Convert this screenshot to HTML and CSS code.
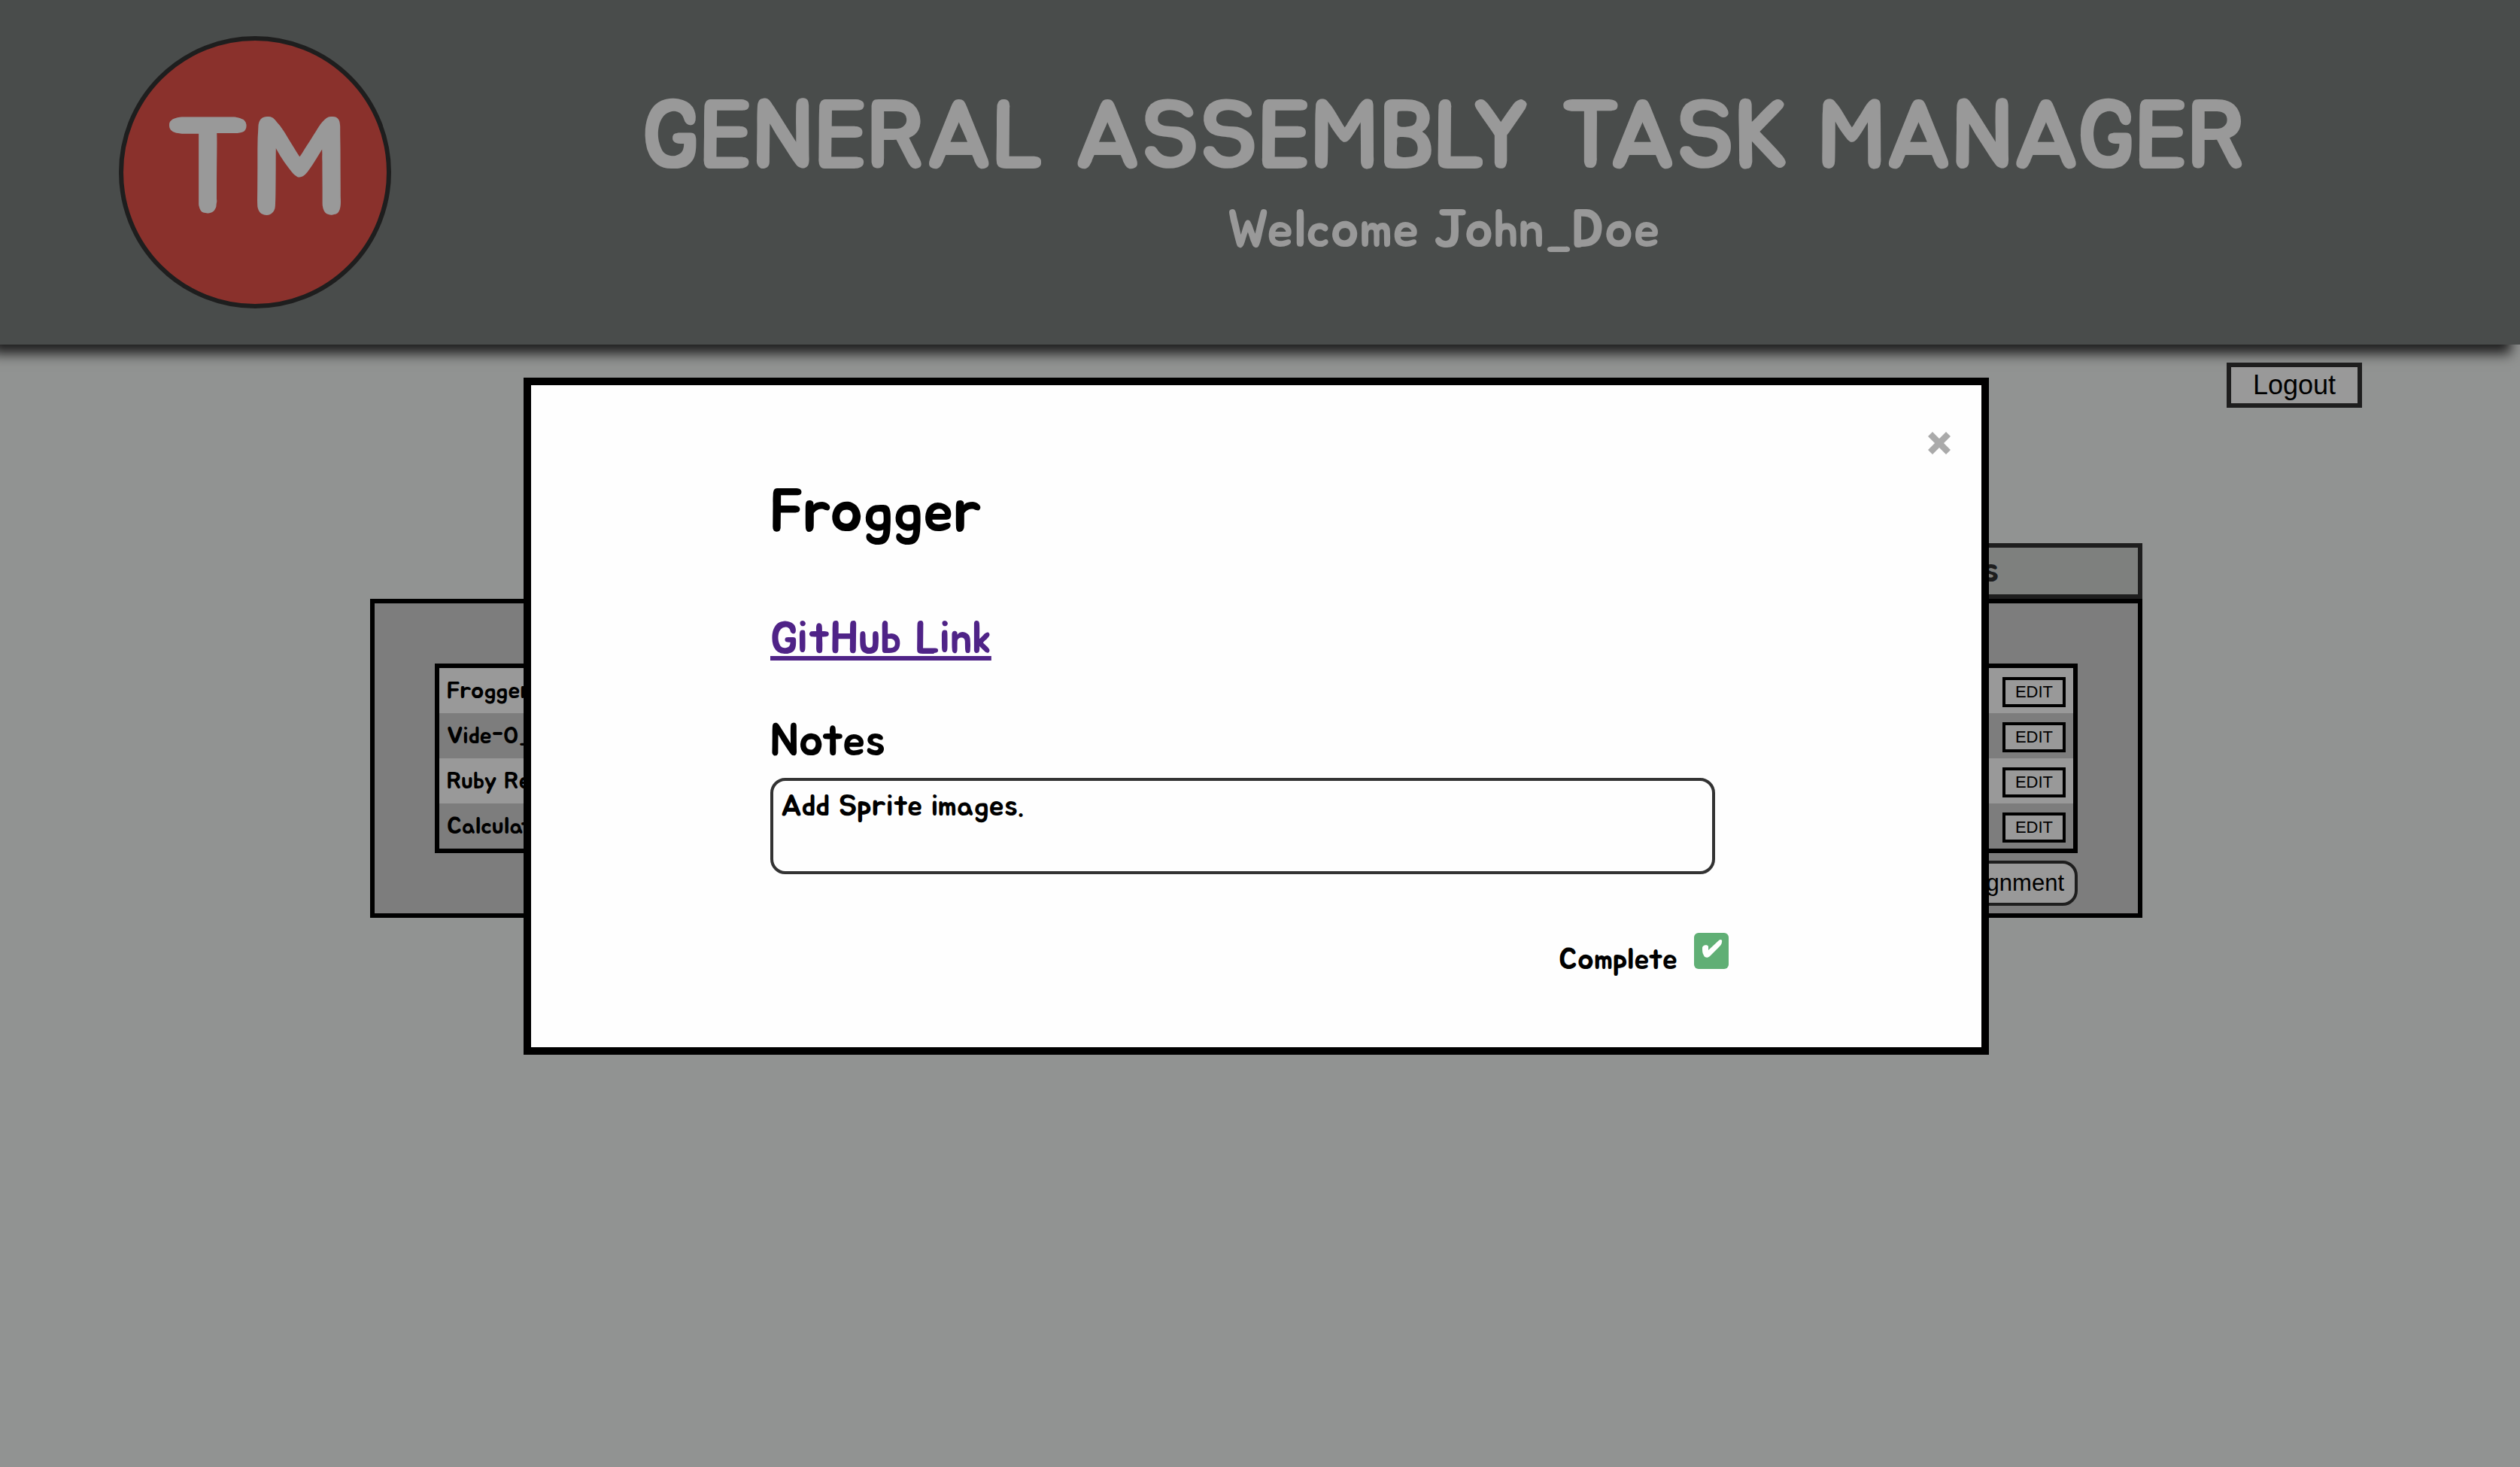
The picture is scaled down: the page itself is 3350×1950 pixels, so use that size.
FILE: index.html
```html
<!DOCTYPE html>
<html lang="en">
<head>
<meta charset="utf-8">
<meta name="viewport" content="width=device-width, initial-scale=1">
<title>General Assembly Task Manager</title>
<link rel="stylesheet" href="styles.css">
</head>
<body>
<header class="header">
  <div class="logo">TM</div>
  <div class="heading">
    <h1 class="title">GENERAL ASSEMBLY TASK MANAGER</h1>
    <h2 class="welcome">Welcome John_Doe</h2>
  </div>
</header>
<nav class="toolbar">
  <button class="logout" type="button">Logout</button>
</nav>
<main class="board">
  <h3 class="tab">Assignments</h3>
  <section class="panel">
    <table class="assignments">
      <tbody>
        <tr><td>Frogger</td><td class="action"><button class="edit" type="button">EDIT</button></td></tr>
        <tr><td>Vide-O_Rama</td><td class="action"><button class="edit" type="button">EDIT</button></td></tr>
        <tr><td>Ruby Refactor</td><td class="action"><button class="edit" type="button">EDIT</button></td></tr>
        <tr><td>Calculator</td><td class="action"><button class="edit" type="button">EDIT</button></td></tr>
      </tbody>
    </table>
    <button class="add" type="button">Add Assignment</button>
  </section>
</main>
<div class="overlay">
  <div class="modal" role="dialog" aria-modal="true" aria-labelledby="modal-title">
    <button class="close" type="button" aria-label="Close">
      <svg width="30" height="30" viewBox="0 0 30 30" aria-hidden="true"><path fill="currentColor" d="M0 6L6 0L15 9L24 0L30 6L21 15L30 24L24 30L15 21L6 30L0 24L9 15Z"/></svg>
    </button>
    <h2 class="modal-title" id="modal-title">Frogger</h2>
    <a class="repo" href="#">GitHub Link</a>
    <label class="notes-label" for="notes">Notes</label>
    <textarea class="notes" id="notes">Add Sprite images.</textarea>
    <div class="complete">
      <label class="complete-label" for="complete">Complete</label>
      <input class="complete-box" type="checkbox" id="complete" checked>
    </div>
  </div>
</div>
</body>
</html>
```
FILE: styles.css
```css
* {
  box-sizing: border-box;
}

body {
  margin: 0;
  min-height: 100vh;
  background: #f2f5f3;
  color: #000;
  font-family: "Jua", "Lato", sans-serif;
  font-weight: 400;
}

h1, h2, h3 {
  margin: 0;
  font-weight: inherit;
}

button {
  font-family: "Liberation Sans", Arial, sans-serif;
  color: #000;
  background: #fff;
  padding: 0;
}

/* Header */
.header {
  display: flex;
  align-items: center;
  padding: 48px 32px 48px 158px;
  background: #7b7f7d;
  box-shadow: -12px 12px 16px #333;
  color: #fff;
}

.logo {
  display: flex;
  align-items: center;
  justify-content: center;
  flex: none;
  width: 362px;
  height: 362px;
  border: 6px solid #333;
  border-radius: 50%;
  background: #e6524a;
  font-size: 182px;
  line-height: 1;
}

.heading {
  flex: 1;
  display: flex;
  flex-direction: column;
  align-items: center;
  gap: 22px;
  padding-top: 14px;
}

.title {
  font-size: 128px;
  line-height: 120px;
}

.welcome {
  font-size: 70px;
  line-height: 80px;
}

/* Page */
.toolbar {
  display: flex;
  justify-content: flex-end;
  padding: 24px 210px 0;
}

.logout {
  width: 180px;
  height: 60px;
  border: 6px solid #333;
  font-size: 36px;
}

.board {
  display: flex;
  flex-direction: column;
  padding: 180px 502px 0 492px;
}

.tab {
  align-self: flex-end;
  width: 27%;
  border: 6px solid #333;
  background: #d2d5d2;
  color: #333;
  font-size: 48px;
  line-height: 62px;
  text-align: center;
}

.panel {
  display: flex;
  flex-direction: column;
  align-items: flex-end;
  gap: 10px;
  padding: 80px 80px 10px;
  border: 6px solid #000;
  background: #d1d1d1;
}

.assignments {
  width: 100%;
  border: 6px solid #000;
  border-spacing: 0;
  font-size: 32px;
  line-height: 40px;
}

.assignments tr:nth-child(odd) {
  background: #fff;
}

.assignments td {
  height: 60px;
  padding: 0 10px;
}

.assignments .action {
  text-align: right;
}

.edit {
  display: inline-block;
  vertical-align: middle;
  width: 84px;
  height: 40px;
  border: 4px solid #000;
  font-size: 22px;
}

.add {
  height: 60px;
  padding: 0 14px;
  border: 4px solid #333;
  border-radius: 20px;
  font-size: 31px;
}

/* Modal */
.overlay {
  position: fixed;
  inset: 0;
  padding: 502px 706px 0 696px;
  overflow: auto;
  background: rgba(0, 0, 0, 0.4);
}

.modal {
  position: relative;
  display: flex;
  flex-direction: column;
  align-items: flex-start;
  padding: 120px 336px 92px 318px;
  border: 10px solid #000;
  background: #fefefe;
}

.close {
  position: absolute;
  top: 49px;
  right: 28px;
  display: flex;
  align-items: center;
  justify-content: center;
  width: 56px;
  height: 56px;
  border: 0;
  background: none;
  color: #aaa;
}

.modal-title {
  font-size: 80px;
  line-height: 100px;
}

.repo {
  margin-top: 83px;
  color: #4f2387;
  font-size: 60px;
  line-height: 70px;
  text-decoration-thickness: 6px;
  text-underline-offset: 4px;
  text-decoration-skip-ink: none;
}

.notes-label {
  margin-top: 66px;
  font-size: 60px;
  line-height: 70px;
}

.notes {
  align-self: stretch;
  height: 128px;
  margin: 13px 18px 0 0;
  padding: 10px;
  border: 4px solid #333;
  border-radius: 20px;
  background: none;
  color: inherit;
  font: inherit;
  font-size: 40px;
  line-height: 48px;
  resize: none;
}

.complete {
  display: flex;
  align-self: flex-end;
  gap: 22px;
  height: 60px;
  margin-top: 78px;
}

.complete-label {
  align-self: flex-end;
  font-size: 40px;
  line-height: 48px;
}

.complete-box {
  appearance: none;
  width: 46px;
  height: 48px;
  margin: 0;
  border-radius: 6px;
  background: #60af75;
}

.complete-box:checked {
  background-image: url("data:image/svg+xml,%3Csvg xmlns='http://www.w3.org/2000/svg' viewBox='0 0 46 48'%3E%3Cpath fill='%23fff' d='M11 20C11 16 18 15 19 18L19 23L33 10C35 8 38 9 37 12C37 15 35 17 33 19L21 31C18 34 14 33 13 30C11 27 11 24 11 20Z'/%3E%3C/svg%3E");
}
```
